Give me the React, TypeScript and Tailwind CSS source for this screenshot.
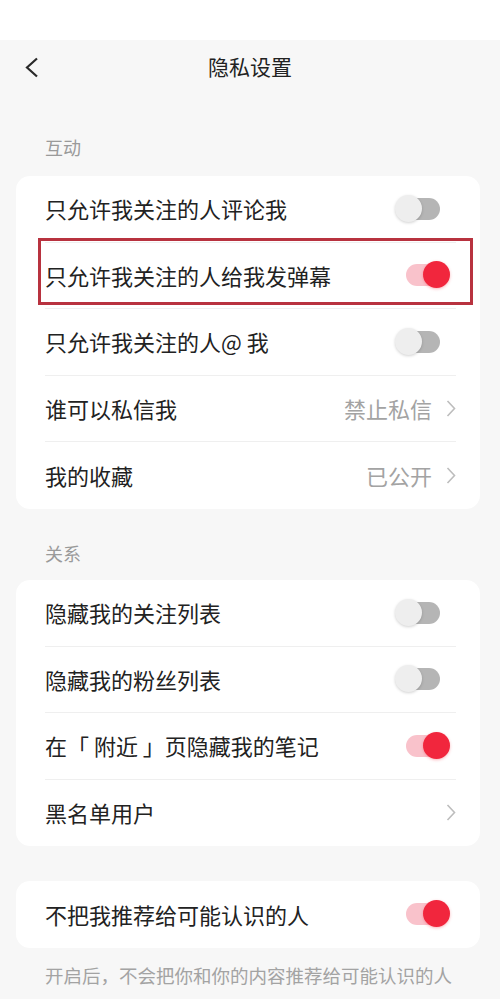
type Row = {
  label: string
  toggle?: boolean
  value?: string
  arrow?: boolean
}

const interact: Row[] = [
  { label: '只允许我关注的人评论我', toggle: false },
  { label: '只允许我关注的人给我发弹幕', toggle: true },
  { label: '只允许我关注的人@ 我', toggle: false },
  { label: '谁可以私信我', value: '禁止私信', arrow: true },
  { label: '我的收藏', value: '已公开', arrow: true },
]

const relation: Row[] = [
  { label: '隐藏我的关注列表', toggle: false },
  { label: '隐藏我的粉丝列表', toggle: false },
  { label: '在「 附近 」页隐藏我的笔记', toggle: true },
  { label: '黑名单用户', arrow: true },
]

function Switch({ on }: { on: boolean }) {
  return (
    <div className="relative w-[56px] h-[28px] mr-[6px] shrink-0">
      <div
        className={
          'absolute left-[12px] right-[10px] top-[3px] h-[22px] rounded-full ' +
          (on ? 'bg-[#f9c2cb]' : 'bg-[#b5b5b5]')
        }
      />
      <div
        className={
          'absolute top-0 w-[27px] h-[27px] rounded-full ' +
          (on
            ? 'left-[29px] bg-[#f1263d] shadow-[0_1px_3px_rgba(240,40,60,0.35)]'
            : 'left-[1px] bg-[#eeeeee] shadow-[0_1px_3px_rgba(0,0,0,0.18)]')
        }
      />
    </div>
  )
}

function Arrow() {
  return (
    <svg width="10" height="17" viewBox="0 0 10 17" className="ml-[14px] shrink-0">
      <polyline points="1.5,1 8.5,8.5 1.5,16" fill="none" stroke="#bdbdbd" strokeWidth="1.6" />
    </svg>
  )
}

function Card({ rows }: { rows: Row[] }) {
  return (
    <div className="ml-4 mr-5 bg-white rounded-[14px] pl-[29px] pr-[24px]">
      {rows.map((r, i) => (
        <div
          key={r.label}
          className={
            'flex items-center h-[66.5px] ' +
            (i < rows.length - 1 ? 'border-b border-[#efefef]' : '')
          }
        >
          <span className="flex-1 text-[22px] text-[#222]">{r.label}</span>
          {r.value && <span className="text-[22px] text-[#a3a3a3]">{r.value}</span>}
          {r.arrow && <Arrow />}
          {r.toggle !== undefined && <Switch on={r.toggle} />}
        </div>
      ))}
    </div>
  )
}

export default function App() {
  return (
    <div
      className="min-h-screen bg-[#f7f7f7] pb-4"
      style={{ fontFamily: '"Noto Sans CJK SC", "Noto Sans", sans-serif' }}
    >
      <div className="h-[40px] bg-white" />

      {/* Header */}
      <div className="flex items-center h-[54px]">
        <div className="w-[60px] pl-[24px] flex items-center">
          <svg width="15" height="21" viewBox="0 0 15 21">
            <polyline points="13,1.5 3,10.5 13,19.5" fill="none" stroke="#2a2a2a" strokeWidth="2.2" />
          </svg>
        </div>
        <h1 className="flex-1 text-center text-[21px] text-[#222]">隐私设置</h1>
        <div className="w-[60px]" />
      </div>

      <p className="mt-[41px] mb-[17px] pl-[45px] text-[18px] leading-[24px] text-[#9a9a9a]">互动</p>
      <div className="relative">
        <Card rows={interact} />
        <div className="absolute left-[38px] top-[62px] w-[435px] h-[67px] border-[3px] border-[#b8323f]" />
      </div>

      <p className="mt-[32.5px] mb-[15px] pl-[45px] text-[18px] leading-[24px] text-[#9a9a9a]">关系</p>
      <Card rows={relation} />

      <div className="mt-[35px]">
        <Card rows={[{ label: '不把我推荐给可能认识的人', toggle: true }]} />
      </div>
      <p className="mt-[15.5px] pl-[45px] text-[18.5px] leading-[24px] text-[#a3a3a3] whitespace-nowrap">
        开启后，不会把你和你的内容推荐给可能认识的人
      </p>
    </div>
  )
}
